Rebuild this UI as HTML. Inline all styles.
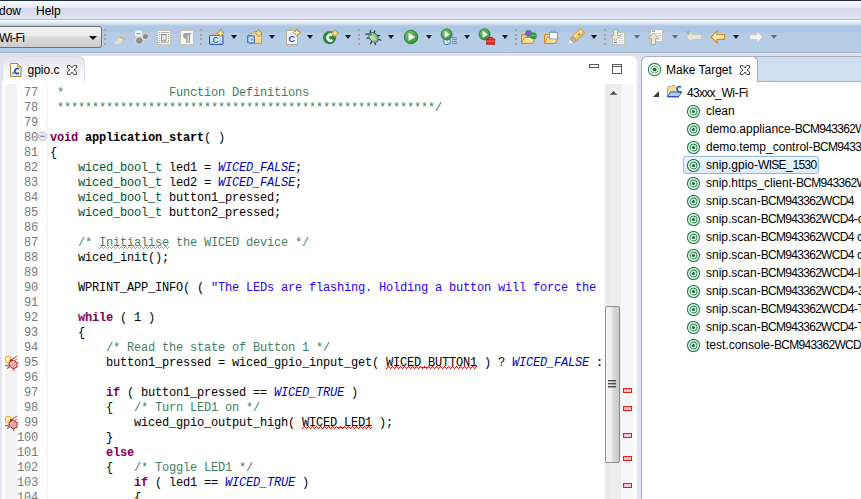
<!DOCTYPE html>
<html><head><meta charset="utf-8"><style>
*{margin:0;padding:0;box-sizing:border-box}
html,body{width:861px;height:499px;overflow:hidden;background:#dfe4f3;position:relative;font-family:"Liberation Sans",sans-serif;font-size:12px;color:#1e1e1e}
.ab{position:absolute;display:block}
#menubar{position:absolute;left:0;top:0;width:861px;height:20px;background:linear-gradient(#ffffff 0px,#f7f9fc 1px,#e7ebf6 7px,#d4daec 7px,#d9deef 11px,#dfe3f3 18px);border-top:1px solid #1c2a3f;border-bottom:1px solid #b3bbcc}
.menu{position:absolute;top:4px;font-size:12px;line-height:14px;color:#000}
#toolbar{position:absolute;left:0;top:20px;width:861px;height:33px;background:linear-gradient(#f9fbfd 0px,#f9fbfd 1px,#eef3fa 1px,#dce7f3 3px,#b3cae4 6px,#adc6e1 7px,#acc5e0 12px,#b4cce5 13px,#b6cde6 32px);border-bottom:1px solid #a8b5c8}
#combo{position:absolute;left:-4px;top:26px;width:106px;height:22px;border:1px solid #707070;border-radius:3px;background:linear-gradient(#f2f2f2,#eaeaea 45%,#dcdcdc 50%,#cdcdcd)}
.grip{position:absolute;width:2px;height:16px;top:29px;background:repeating-linear-gradient(#aea593 0 2px,transparent 2px 4.5px)}
.dd{position:absolute;top:35px;width:0;height:0;border-left:3.5px solid transparent;border-right:3.5px solid transparent;border-top:4px solid #1a1a1a}
.dd.g{border-top-color:#6e6e6e}
#editor{position:absolute;left:2px;top:56px;width:635px;height:450px;background:#fff;border-top-left-radius:6px;border-top-right-radius:6px}
#etab{position:absolute;left:2px;top:56px;width:83px;height:25px;background:linear-gradient(#e1e4ea,#ffffff);border-top-left-radius:6px;border-top-right-radius:6px;border:1px solid #dadde6;border-bottom:none}
.ruler{position:absolute;left:5px;top:84px;width:12px;height:420px;background:#f3f3f3}
.sep{position:absolute;left:47px;top:84px;width:1px;height:420px;background:#f3f3f3}
.num{position:absolute;right:823px;height:15px;line-height:15px;font-family:"Liberation Mono",monospace;font-size:12px;letter-spacing:-0.2px;color:#787878;white-space:pre}
.ln{position:absolute;left:50px;height:15px;line-height:15px;font-family:"Liberation Mono",monospace;font-size:12px;letter-spacing:-0.2px;color:#000;white-space:pre;width:554px;overflow:hidden}
.c{color:#3F7F5F} .k{color:#7F0055;font-weight:bold} .b{font-weight:bold} .t{color:#005032} .e{color:#0000C0;font-style:italic} .s{color:#2A00FF}
.sq{position:absolute}
#vscroll{position:absolute;left:605px;top:84px;width:16px;height:420px;background:linear-gradient(90deg,#e9e9e9,#efefef 50%,#ebebeb)}
#thumb{position:absolute;left:605px;top:306px;width:15px;height:157px;border:1px solid #8d8d8d;border-radius:2px;background:linear-gradient(90deg,#f7f7f7,#ececec 45%,#d9d9d9 55%,#c9c9c9)}
#ovr{position:absolute;left:621px;top:84px;width:13px;height:420px;background:#f7f7f7}
.mk{position:absolute;left:623px;width:9px;height:5px;border:1px solid #f01818;background:#f2c6cc}
#rpanel{position:absolute;left:641px;top:56px;width:230px;height:450px;background:#fff;border-left:1px solid #a6b0c4;border-top:1px solid #a6b0c4;border-top-left-radius:6px}
#rtabbar{position:absolute;left:745px;top:56px;width:120px;height:26px;background:#cfdff0;border-top:1px solid #a6b0c4;border-bottom:1px solid #a6b0c4}
#rtab{position:absolute;left:641px;top:56px;width:117px;height:26px;background:#fff;border:1px solid #a6b0c4;border-bottom:none;border-top-left-radius:6px;border-top-right-radius:6px}
.ti{position:absolute;height:18px;line-height:18px;white-space:nowrap;font-size:12px;color:#000}
.u{letter-spacing:-0.7px}
.sel{position:absolute;border:1px solid #92b8e6;border-radius:3px;background:linear-gradient(#f1f7fe,#dbeafc)}
</style></head><body>
<div id="menubar"></div>
<div class="menu" style="left:-1px">dow</div>
<div class="menu" style="left:36px">Help</div>
<div id="toolbar"></div>
<div id="combo"></div>
<div class="ab" style="left:-1px;top:32px;line-height:12px;font-size:12px;letter-spacing:-0.5px;color:#000">Wi-Fi</div>
<svg class="ab" style="left:89px;top:36px" width="8" height="5"><polygon points="0,0 8,0 4,4" fill="#111"/></svg>
<div class="grip" style="left:104px"></div>
<div class="grip" style="left:200px"></div>
<div class="grip" style="left:358px"></div>
<div class="grip" style="left:515px"></div>
<div class="grip" style="left:604px"></div>
<div class="dd" style="left:231px"></div>
<div class="dd" style="left:269px"></div>
<div class="dd" style="left:307px"></div>
<div class="dd" style="left:345px"></div>
<div class="dd" style="left:388px"></div>
<div class="dd" style="left:426px"></div>
<div class="dd" style="left:464px"></div>
<div class="dd" style="left:502px"></div>
<div class="dd" style="left:591px"></div>
<div class="dd g" style="left:634px"></div>
<div class="dd g" style="left:672px"></div>
<div class="dd" style="left:733px"></div>
<div class="dd g" style="left:771px"></div>
<svg class="ab" style="left:0;top:0" width="861" height="53"><defs><radialGradient id="gGreen" cx="0.4" cy="0.35" r="0.7"><stop offset="0" stop-color="#7cc878"/><stop offset="1" stop-color="#2e8c34"/></radialGradient><linearGradient id="gBlueBox" x1="0" y1="0" x2="0" y2="1"><stop offset="0" stop-color="#dbeafb"/><stop offset="1" stop-color="#98bfe9"/></linearGradient><linearGradient id="gFold" x1="0" y1="0" x2="0" y2="1"><stop offset="0" stop-color="#fff0c4"/><stop offset="1" stop-color="#f4cd7e"/></linearGradient><linearGradient id="gBug" x1="0" y1="0" x2="1" y2="1"><stop offset="0" stop-color="#e6f2d8"/><stop offset="1" stop-color="#6ea454"/></linearGradient><linearGradient id="gPen" x1="0" y1="0" x2="0" y2="1"><stop offset="0" stop-color="#ffe9a0"/><stop offset="1" stop-color="#f2b848"/></linearGradient><linearGradient id="gArrow" x1="0" y1="0" x2="0" y2="1"><stop offset="0" stop-color="#fffbe6"/><stop offset="1" stop-color="#fbd88a"/></linearGradient><linearGradient id="gFile" x1="0" y1="0" x2="0" y2="1"><stop offset="0" stop-color="#ffffff"/><stop offset="1" stop-color="#dfe8f4"/></linearGradient></defs><path d="M110,43.5 H121" stroke="#c9c2b3" stroke-width="1"/><polygon points="114,43.8 125.6,29.6 125.6,39.8 121,43.8" fill="#c8c6be"/><polygon points="114,43.8 119.6,37 123.4,39.4 120.6,43.8" fill="#e4e0c8"/><path d="M119.6,37 L125.6,39.6" stroke="#a9a79f" stroke-width="1"/><rect x="135" y="30.5" width="7" height="6" rx="2" fill="#f4f4f4"/><rect x="136.5" y="33" width="4" height="1.2" fill="#999"/><circle cx="139.3" cy="40.6" r="3.8" fill="#8d8d8d" stroke="#f2f2f2" stroke-width="0.8"/><circle cx="145.6" cy="36.5" r="3.2" fill="#8d8d8d" stroke="#f2f2f2" stroke-width="0.8"/><rect x="157.5" y="30.5" width="13" height="14" fill="#fafafa" stroke="#c9c0b6"/><rect x="159" y="32" width="1" height="1" fill="#a0a0a0"/><rect x="159" y="34" width="1" height="1" fill="#a0a0a0"/><rect x="159" y="36" width="1" height="1" fill="#a0a0a0"/><rect x="159" y="38" width="1" height="1" fill="#a0a0a0"/><rect x="159" y="40" width="1" height="1" fill="#a0a0a0"/><rect x="159" y="42" width="1" height="1" fill="#a0a0a0"/><rect x="168" y="34" width="1" height="1" fill="#a0a0a0"/><rect x="168" y="36" width="1" height="1" fill="#a0a0a0"/><rect x="168" y="38" width="1" height="1" fill="#a0a0a0"/><rect x="168" y="40" width="1" height="1" fill="#a0a0a0"/><path d="M161,32.5 H169 M161,42.5 H169" stroke="#b0b0b0"/><rect x="161.5" y="34.5" width="4.5" height="6.5" fill="#dedede" stroke="#8a8a8a"/><path d="M162,36.5 H166 M162,38.5 H166" stroke="#f4f4f4"/><rect x="180.5" y="30.5" width="13" height="14" fill="#f5f5f5" stroke="#c9c0b6"/><path d="M185.5,33 H191 V34.5 H190 V43 H188.6 V34.5 H187.6 V43 H186.2 V38.6 A2.8,2.8 0 0 1 185.5,33 Z" fill="#9e9e9e"/><rect x="212.5" y="32.8" width="5.5" height="2.4" fill="#e2aa96"/><rect x="209.5" y="35.5" width="13.5" height="9" rx="1" fill="url(#gBlueBox)" stroke="#2f52bd"/><path d="M209,35.6 H223.6" stroke="#8a6a9a" stroke-width="1"/><text x="212.6" y="43.4" font-family="Liberation Sans" font-weight="bold" font-size="8.6" fill="#1b5a92" stroke="#ffffff" stroke-width="1.6" paint-order="stroke">C</text><polygon points="220.6,29.499999999999996 222.2,31.699999999999996 224.4,33.3 222.2,34.9 220.6,37.099999999999994 219.0,34.9 216.79999999999998,33.3 219.0,31.699999999999996" fill="#d6ad2e" stroke="#b98f1c" stroke-width="0.8" stroke-linejoin="round"/><path d="M218.2,33.3 H223.0 M220.6,30.9 V35.699999999999996" stroke="#fff9dc" stroke-width="1.1"/><path d="M249.5,43.5 V33.5 H253 L254.5,31.5 H258.5 L260,33.5 H261.5 V43.5 Z" fill="url(#gFold)" stroke="#d4982f"/><rect x="247.5" y="35.5" width="7" height="7.5" rx="0.8" fill="#85a8e0" stroke="#4d73b8"/><text x="248.6" y="42" font-family="Liberation Sans" font-weight="bold" font-size="7" fill="#ffffff">C</text><polygon points="258.6,29.499999999999996 260.20000000000005,31.699999999999996 262.40000000000003,33.3 260.20000000000005,34.9 258.6,37.099999999999994 257.0,34.9 254.8,33.3 257.0,31.699999999999996" fill="#d6ad2e" stroke="#b98f1c" stroke-width="0.8" stroke-linejoin="round"/><path d="M256.20000000000005,33.3 H261.0 M258.6,30.9 V35.699999999999996" stroke="#fff9dc" stroke-width="1.1"/><path d="M286.5,30.5 H294.5 L297.5,33.5 V44.5 H286.5 Z" fill="#eef3fb" stroke="#b8ad85"/><text x="288.6" y="42.4" font-family="Liberation Sans" font-weight="bold" font-size="9" fill="#3f3ac8">C</text><polygon points="296.8,28.8 298.40000000000003,31.0 300.6,32.6 298.40000000000003,34.2 296.8,36.4 295.2,34.2 293.0,32.6 295.2,31.0" fill="#d6ad2e" stroke="#b98f1c" stroke-width="0.8" stroke-linejoin="round"/><path d="M294.40000000000003,32.6 H299.2 M296.8,30.200000000000003 V35.0" stroke="#fff9dc" stroke-width="1.1"/><circle cx="329.5" cy="37.6" r="6.6" fill="#2c8a3c"/><path d="M332.4,35.2 A3,3 0 1 0 332.4,40" fill="none" stroke="#fff" stroke-width="2.6"/><polygon points="334.8,29.400000000000002 336.40000000000003,31.6 338.6,33.2 336.40000000000003,34.800000000000004 334.8,37.0 333.2,34.800000000000004 331.0,33.2 333.2,31.6" fill="#d6ad2e" stroke="#b98f1c" stroke-width="0.8" stroke-linejoin="round"/><path d="M332.40000000000003,33.2 H337.2 M334.8,30.800000000000004 V35.6" stroke="#fff9dc" stroke-width="1.1"/><g stroke="#23402e" stroke-width="1.25" fill="none" stroke-linecap="round"><path d="M370.4,30.3 V33.6 M374.8,31 L373.6,34 M365.8,34 H369.3 M377,35.4 L379.8,35.7 M366.9,38.1 L369.7,37.8 M378.7,39.2 L380.8,40.2 M371.8,41 L370.7,43.9 M374.5,42 L375.6,44.5"/></g><ellipse cx="373.6" cy="37.4" rx="3.9" ry="5.4" transform="rotate(-42 373.6 37.4)" fill="url(#gBug)" stroke="#2b6a7a" stroke-width="1"/><path d="M371.5,36 L375.5,40" stroke="#f4fbe8" stroke-width="0.9" opacity="0.8"/><circle cx="370.3" cy="34.4" r="1.5" fill="#4f8a45"/><circle cx="411" cy="37" r="6.8" fill="url(#gGreen)" stroke="#2b7d33" stroke-width="0.9"/><polygon points="408.62,32.92 415.08,37 408.62,41.08" fill="#fff"/><circle cx="447" cy="41.3" r="3.4" fill="#f4f8ff" stroke="#3a68b6" stroke-width="1"/><path d="M447,39.3 V41.5 L448.5,42.7" stroke="#3a68b6" stroke-width="0.8" fill="none"/><path d="M452,37.5 H457 M452,39.5 H457 M452,41.5 H457 M452,43.5 H457" stroke="#6684b8" stroke-width="0.9"/><circle cx="446.6" cy="34.4" r="5.5" fill="url(#gGreen)" stroke="#2b7d33" stroke-width="0.9"/><polygon points="444.675,31.099999999999998 449.90000000000003,34.4 444.675,37.699999999999996" fill="#fff"/><circle cx="484.6" cy="34.4" r="5.5" fill="url(#gGreen)" stroke="#2b7d33" stroke-width="0.9"/><polygon points="482.675,31.099999999999998 487.90000000000003,34.4 482.675,37.699999999999996" fill="#fff"/><rect x="486.5" y="38.8" width="8.3" height="5.5" fill="#e02424" stroke="#b01010" stroke-width="0.6"/><path d="M488.8,38.8 V37.5 H492.5 V38.8" fill="none" stroke="#d01818" stroke-width="1"/><path d="M486.5,41.2 H494.8" stroke="#f8a0a0" stroke-width="0.7"/><path d="M521.5,43.5 V34.5 h4 l1,1 h5 v2" fill="#f3cf85" stroke="#c98a2e" stroke-width="1"/><path d="M521.5,43.5 l3,-6 h11 l-3,6 z" fill="url(#gFold)" stroke="#c98a2e" stroke-width="1"/><circle cx="528.6" cy="33.4" r="3.4" fill="#7462b6"/><circle cx="533.4" cy="35.7" r="3.5" fill="#37974a"/><path d="M530.5,35.5 H536.5" stroke="#8fd09a" stroke-width="0.6"/><path d="M544.5,43.5 V34.5 h4 l1,1 h5 v2" fill="#f3cf85" stroke="#c98a2e" stroke-width="1"/><path d="M544.5,43.5 l3,-6 h11 l-3,6 z" fill="url(#gFold)" stroke="#c98a2e" stroke-width="1"/><rect x="549.5" y="32.5" width="8" height="6.5" fill="#f6f8fc" stroke="#8a98b8"/><path d="M551.5,32.5 V31 H555.5 V32.5" fill="none" stroke="#8a98b8"/><g transform="rotate(-42 576 37)"><polygon points="566.5,37 570.5,34.4 570.5,39.6" fill="#fffbe0" stroke="#e8d890" stroke-width="0.5"/><rect x="570.5" y="34.3" width="3.6" height="5.4" fill="#bdb4ad" stroke="#8a7d70" stroke-width="0.6"/><rect x="574.2" y="34" width="11" height="6" rx="1.2" fill="url(#gPen)" stroke="#c78c22" stroke-width="0.8"/><circle cx="580" cy="37" r="0.8" fill="#2a4ea0"/></g><rect x="612.5" y="32.5" width="12" height="12" fill="#f8f8f5" stroke="#c8c2b8"/><path d="M619,34.5 H623 M619,36.5 H623 M619,38.5 H623 M619,40.5 H623 M618,42.5 H623" stroke="#cfcfcf" stroke-width="0.8"/><rect x="614" y="42" width="3" height="1.2" fill="#7a8ba0"/><path d="M613.5,29.5 H617.5 V35.5 H620.5 L615.5,41 L610.5,35.5 H613.5 Z" fill="#e9e6d6" stroke="#aaa69a" stroke-width="0.9"/><rect x="650.5" y="29.5" width="12" height="12" fill="#f8f8f5" stroke="#c8c2b8"/><path d="M655,33.5 H661 M655,35.5 H661 M656,37.5 H661 M656,39.5 H661" stroke="#cfcfcf" stroke-width="0.8"/><rect x="652" y="30.5" width="3" height="1.2" fill="#7a8ba0"/><path d="M651.5,44.5 H655.5 V38.5 H658.5 L653.5,33 L648.5,38.5 H651.5 Z" fill="#e9e6d6" stroke="#aaa69a" stroke-width="0.9"/><path d="M686.5,37 L692,31.5 V34.5 H701.5 V39.5 H692 V42.5 Z" fill="#e7e4d8" stroke="#c9c5b8" stroke-width="0.9"/><path d="M686,31 L689,34 M687,33.5 L689.5,31" stroke="#9a9a9a" stroke-width="0.8"/><path d="M711,37 L717,31.2 V34.6 H724.6 V39.4 H717 V42.8 Z" fill="url(#gArrow)" stroke="#d08a1c" stroke-width="1.1"/><path d="M763,37 L757,31.2 V34.6 H749.4 V39.4 H757 V42.8 Z" fill="#f4f4f4" stroke="#c6c6c6" stroke-width="1"/></svg>
<div id="editor"></div>
<div id="etab"></div>
<svg class="ab" style="left:0;top:56px" width="100" height="28">
<path d="M10.5,7.5 H17.5 L21,11 V20.5 H10.5 Z" fill="url(#gFile2)" stroke="#a88a48"/>
<path d="M17.5,7.5 V11 H21 Z" fill="#e8c878" stroke="#a88a48" stroke-width="0.6"/>
<rect x="12.4" y="16.4" width="1.5" height="1.5" fill="#1f5a98"/>
<path d="M19,13.3 A2.4,2.6 0 1 0 19,16.9" fill="none" stroke="#1f5a98" stroke-width="1.7"/>
<polygon points="67.5,9.5 70.1,9.5 72.0,12.1 73.9,9.5 76.5,9.5 76.5,12.1 73.9,14.0 76.5,15.9 76.5,18.5 73.9,18.5 72.0,15.9 70.1,18.5 67.5,18.5 67.5,15.9 70.1,14.0 67.5,12.1" fill="#fff" stroke="#4a4a4a" stroke-width="1" stroke-linejoin="round"/>
<defs><linearGradient id="gFile2" x1="0" y1="0" x2="0" y2="1"><stop offset="0" stop-color="#ffffff"/><stop offset="1" stop-color="#e2eaf5"/></linearGradient></defs>
</svg>
<div class="ab" style="left:27.5px;top:63px;line-height:14px;font-size:12px;color:#000">gpio.c</div>
<svg class="ab" style="left:585px;top:60px" width="45" height="18">
<rect x="4.5" y="4.5" width="9" height="3" fill="#fff" stroke="#5a5a5a"/>
<rect x="27.5" y="4.5" width="9" height="9" fill="#fff" stroke="#5a5a5a"/>
<path d="M27.5,6.5 H36.5" stroke="#5a5a5a" stroke-width="1"/>
</svg>
<svg class="ab" style="left:36px;top:130px" width="12" height="12">
<circle cx="6.6" cy="6.3" r="4.2" fill="#e9eff8" stroke="#b4c0d4" stroke-width="1"/>
<path d="M4.3,6.3 H8.9" stroke="#6f7f9a" stroke-width="1.2"/>
</svg>
<div class="ruler"></div>
<div class="sep"></div>
<svg class="ab" style="left:2px;top:353px" width="18" height="19">
<rect x="3.5" y="3.5" width="5.5" height="6" rx="1" fill="#fde7a2" stroke="#ecae36" stroke-width="1"/>
<rect x="4.6" y="5.2" width="3.4" height="1.2" fill="#fffaf0"/>
<g stroke="#b52222" stroke-width="0.9" fill="none"><path d="M10,6.5 L15,3 M3,13 L7,11.8 M4.8,15.5 L8,14 M16.5,9.5 L14.8,10 M15.5,14.5 L14,13.8 M11.8,17.8 L11.6,15.8 M14.5,5.8 L13.6,7.6"/></g>
<ellipse cx="11.2" cy="11.4" rx="3.7" ry="4.3" transform="rotate(-40 11.2 11.4)" fill="#eab4b4" stroke="#b52222" stroke-width="0.9"/>
<path d="M8.8,13.5 L13.5,8.8 M10.3,14.8 L14.6,10.5" stroke="#d88080" stroke-width="0.7"/>
<circle cx="9" cy="7.2" r="1.2" fill="#b52222"/>
<rect x="5.5" y="12.5" width="1.8" height="1.8" fill="#6a8ab0"/>
</svg><svg class="ab" style="left:2px;top:413px" width="18" height="19">
<rect x="3.5" y="3.5" width="5.5" height="6" rx="1" fill="#fde7a2" stroke="#ecae36" stroke-width="1"/>
<rect x="4.6" y="5.2" width="3.4" height="1.2" fill="#fffaf0"/>
<g stroke="#b52222" stroke-width="0.9" fill="none"><path d="M10,6.5 L15,3 M3,13 L7,11.8 M4.8,15.5 L8,14 M16.5,9.5 L14.8,10 M15.5,14.5 L14,13.8 M11.8,17.8 L11.6,15.8 M14.5,5.8 L13.6,7.6"/></g>
<ellipse cx="11.2" cy="11.4" rx="3.7" ry="4.3" transform="rotate(-40 11.2 11.4)" fill="#eab4b4" stroke="#b52222" stroke-width="0.9"/>
<path d="M8.8,13.5 L13.5,8.8 M10.3,14.8 L14.6,10.5" stroke="#d88080" stroke-width="0.7"/>
<circle cx="9" cy="7.2" r="1.2" fill="#b52222"/>
<rect x="5.5" y="12.5" width="1.8" height="1.8" fill="#6a8ab0"/>
</svg>
<div class="num" style="top:86px">77</div><div class="num" style="top:101px">78</div><div class="num" style="top:116px">79</div><div class="num" style="top:131px">80</div><div class="num" style="top:146px">81</div><div class="num" style="top:161px">82</div><div class="num" style="top:176px">83</div><div class="num" style="top:191px">84</div><div class="num" style="top:206px">85</div><div class="num" style="top:221px">86</div><div class="num" style="top:236px">87</div><div class="num" style="top:251px">88</div><div class="num" style="top:266px">89</div><div class="num" style="top:281px">90</div><div class="num" style="top:296px">91</div><div class="num" style="top:311px">92</div><div class="num" style="top:326px">93</div><div class="num" style="top:341px">94</div><div class="num" style="top:356px">95</div><div class="num" style="top:371px">96</div><div class="num" style="top:386px">97</div><div class="num" style="top:401px">98</div><div class="num" style="top:416px">99</div><div class="num" style="top:431px">100</div><div class="num" style="top:446px">101</div><div class="num" style="top:461px">102</div><div class="num" style="top:476px">103</div><div class="num" style="top:491px">104</div>
<div class="ln" style="top:86px"><span class="c"> *               Function Definitions</span></div><div class="ln" style="top:101px"><span class="c"> ******************************************************/</span></div><div class="ln" style="top:116px"></div><div class="ln" style="top:131px"><span class="k">void</span> <span class="b">application_start</span>( )</div><div class="ln" style="top:146px">{</div><div class="ln" style="top:161px">    <span class="t">wiced_bool_t</span> led1 = <span class="e">WICED_FALSE</span>;</div><div class="ln" style="top:176px">    <span class="t">wiced_bool_t</span> led2 = <span class="e">WICED_FALSE</span>;</div><div class="ln" style="top:191px">    <span class="t">wiced_bool_t</span> button1_pressed;</div><div class="ln" style="top:206px">    <span class="t">wiced_bool_t</span> button2_pressed;</div><div class="ln" style="top:221px"></div><div class="ln" style="top:236px">    <span class="c">/* Initialise the WICED device */</span></div><div class="ln" style="top:251px">    wiced_init();</div><div class="ln" style="top:266px"></div><div class="ln" style="top:281px">    WPRINT_APP_INFO( ( <span class="s">&quot;The LEDs are flashing. Holding a button will force the</span></div><div class="ln" style="top:296px"></div><div class="ln" style="top:311px">    <span class="k">while</span> ( 1 )</div><div class="ln" style="top:326px">    {</div><div class="ln" style="top:341px">        <span class="c">/* Read the state of Button 1 */</span></div><div class="ln" style="top:356px">        button1_pressed = wiced_gpio_input_get( WICED_BUTTON1 ) ? <span class="e">WICED_FALSE</span> :</div><div class="ln" style="top:371px"></div><div class="ln" style="top:386px">        <span class="k">if</span> ( button1_pressed == <span class="e">WICED_TRUE</span> )</div><div class="ln" style="top:401px">        {   <span class="c">/* Turn LED1 on */</span></div><div class="ln" style="top:416px">            wiced_gpio_output_high( WICED_LED1 );</div><div class="ln" style="top:431px">        }</div><div class="ln" style="top:446px">        <span class="k">else</span></div><div class="ln" style="top:461px">        {   <span class="c">/* Toggle LED1 */</span></div><div class="ln" style="top:476px">            <span class="k">if</span> ( led1 == <span class="e">WICED_TRUE</span> )</div><div class="ln" style="top:491px">            {</div>
<svg class="sq" style="left:99.0px;top:246px" width="70.0" height="3" shape-rendering="crispEdges"><path d="M0,2h1v1h-1zM1,1h1v1h-1zM2,0h1v1h-1zM3,1h1v1h-1zM4,2h1v1h-1zM5,1h1v1h-1zM6,0h1v1h-1zM7,1h1v1h-1zM8,2h1v1h-1zM9,1h1v1h-1zM10,0h1v1h-1zM11,1h1v1h-1zM12,2h1v1h-1zM13,1h1v1h-1zM14,0h1v1h-1zM15,1h1v1h-1zM16,2h1v1h-1zM17,1h1v1h-1zM18,0h1v1h-1zM19,1h1v1h-1zM20,2h1v1h-1zM21,1h1v1h-1zM22,0h1v1h-1zM23,1h1v1h-1zM24,2h1v1h-1zM25,1h1v1h-1zM26,0h1v1h-1zM27,1h1v1h-1zM28,2h1v1h-1zM29,1h1v1h-1zM30,0h1v1h-1zM31,1h1v1h-1zM32,2h1v1h-1zM33,1h1v1h-1zM34,0h1v1h-1zM35,1h1v1h-1zM36,2h1v1h-1zM37,1h1v1h-1zM38,0h1v1h-1zM39,1h1v1h-1zM40,2h1v1h-1zM41,1h1v1h-1zM42,0h1v1h-1zM43,1h1v1h-1zM44,2h1v1h-1zM45,1h1v1h-1zM46,0h1v1h-1zM47,1h1v1h-1zM48,2h1v1h-1zM49,1h1v1h-1zM50,0h1v1h-1zM51,1h1v1h-1zM52,2h1v1h-1zM53,1h1v1h-1zM54,0h1v1h-1zM55,1h1v1h-1zM56,2h1v1h-1zM57,1h1v1h-1zM58,0h1v1h-1zM59,1h1v1h-1zM60,2h1v1h-1zM61,1h1v1h-1zM62,0h1v1h-1zM63,1h1v1h-1zM64,2h1v1h-1zM65,1h1v1h-1zM66,0h1v1h-1zM67,1h1v1h-1zM68,2h1v1h-1zM69,1h1v1h-1z" fill="#FF7F50"/></svg><svg class="sq" style="left:386.0px;top:366px" width="91.0" height="3" shape-rendering="crispEdges"><path d="M0,2h1v1h-1zM1,1h1v1h-1zM2,0h1v1h-1zM3,1h1v1h-1zM4,2h1v1h-1zM5,1h1v1h-1zM6,0h1v1h-1zM7,1h1v1h-1zM8,2h1v1h-1zM9,1h1v1h-1zM10,0h1v1h-1zM11,1h1v1h-1zM12,2h1v1h-1zM13,1h1v1h-1zM14,0h1v1h-1zM15,1h1v1h-1zM16,2h1v1h-1zM17,1h1v1h-1zM18,0h1v1h-1zM19,1h1v1h-1zM20,2h1v1h-1zM21,1h1v1h-1zM22,0h1v1h-1zM23,1h1v1h-1zM24,2h1v1h-1zM25,1h1v1h-1zM26,0h1v1h-1zM27,1h1v1h-1zM28,2h1v1h-1zM29,1h1v1h-1zM30,0h1v1h-1zM31,1h1v1h-1zM32,2h1v1h-1zM33,1h1v1h-1zM34,0h1v1h-1zM35,1h1v1h-1zM36,2h1v1h-1zM37,1h1v1h-1zM38,0h1v1h-1zM39,1h1v1h-1zM40,2h1v1h-1zM41,1h1v1h-1zM42,0h1v1h-1zM43,1h1v1h-1zM44,2h1v1h-1zM45,1h1v1h-1zM46,0h1v1h-1zM47,1h1v1h-1zM48,2h1v1h-1zM49,1h1v1h-1zM50,0h1v1h-1zM51,1h1v1h-1zM52,2h1v1h-1zM53,1h1v1h-1zM54,0h1v1h-1zM55,1h1v1h-1zM56,2h1v1h-1zM57,1h1v1h-1zM58,0h1v1h-1zM59,1h1v1h-1zM60,2h1v1h-1zM61,1h1v1h-1zM62,0h1v1h-1zM63,1h1v1h-1zM64,2h1v1h-1zM65,1h1v1h-1zM66,0h1v1h-1zM67,1h1v1h-1zM68,2h1v1h-1zM69,1h1v1h-1zM70,0h1v1h-1zM71,1h1v1h-1zM72,2h1v1h-1zM73,1h1v1h-1zM74,0h1v1h-1zM75,1h1v1h-1zM76,2h1v1h-1zM77,1h1v1h-1zM78,0h1v1h-1zM79,1h1v1h-1zM80,2h1v1h-1zM81,1h1v1h-1zM82,0h1v1h-1zM83,1h1v1h-1zM84,2h1v1h-1zM85,1h1v1h-1zM86,0h1v1h-1zM87,1h1v1h-1zM88,2h1v1h-1zM89,1h1v1h-1zM90,0h1v1h-1z" fill="#FF0000"/></svg><svg class="sq" style="left:302.0px;top:426px" width="70.0" height="3" shape-rendering="crispEdges"><path d="M0,2h1v1h-1zM1,1h1v1h-1zM2,0h1v1h-1zM3,1h1v1h-1zM4,2h1v1h-1zM5,1h1v1h-1zM6,0h1v1h-1zM7,1h1v1h-1zM8,2h1v1h-1zM9,1h1v1h-1zM10,0h1v1h-1zM11,1h1v1h-1zM12,2h1v1h-1zM13,1h1v1h-1zM14,0h1v1h-1zM15,1h1v1h-1zM16,2h1v1h-1zM17,1h1v1h-1zM18,0h1v1h-1zM19,1h1v1h-1zM20,2h1v1h-1zM21,1h1v1h-1zM22,0h1v1h-1zM23,1h1v1h-1zM24,2h1v1h-1zM25,1h1v1h-1zM26,0h1v1h-1zM27,1h1v1h-1zM28,2h1v1h-1zM29,1h1v1h-1zM30,0h1v1h-1zM31,1h1v1h-1zM32,2h1v1h-1zM33,1h1v1h-1zM34,0h1v1h-1zM35,1h1v1h-1zM36,2h1v1h-1zM37,1h1v1h-1zM38,0h1v1h-1zM39,1h1v1h-1zM40,2h1v1h-1zM41,1h1v1h-1zM42,0h1v1h-1zM43,1h1v1h-1zM44,2h1v1h-1zM45,1h1v1h-1zM46,0h1v1h-1zM47,1h1v1h-1zM48,2h1v1h-1zM49,1h1v1h-1zM50,0h1v1h-1zM51,1h1v1h-1zM52,2h1v1h-1zM53,1h1v1h-1zM54,0h1v1h-1zM55,1h1v1h-1zM56,2h1v1h-1zM57,1h1v1h-1zM58,0h1v1h-1zM59,1h1v1h-1zM60,2h1v1h-1zM61,1h1v1h-1zM62,0h1v1h-1zM63,1h1v1h-1zM64,2h1v1h-1zM65,1h1v1h-1zM66,0h1v1h-1zM67,1h1v1h-1zM68,2h1v1h-1zM69,1h1v1h-1z" fill="#FF0000"/></svg>
<div id="vscroll"></div>
<svg class="ab" style="left:609px;top:90px" width="9" height="6"><defs><linearGradient id="gUp" x1="0" y1="0" x2="0" y2="1"><stop offset="0" stop-color="#2a2a2a"/><stop offset="1" stop-color="#7a7a7a"/></linearGradient></defs><polygon points="0.5,5 8.5,5 4.5,1" fill="url(#gUp)"/></svg>
<div id="thumb"></div>
<svg class="ab" style="left:608px;top:380px" width="9" height="8"><rect x="0" y="0" width="8" height="1.4" fill="#4a4a4a"/><rect x="0" y="3" width="8" height="1.4" fill="#4a4a4a"/><rect x="0" y="6" width="8" height="1.4" fill="#4a4a4a"/></svg>
<div id="ovr"></div>
<div class="mk" style="top:388px"></div>
<div class="mk" style="top:406px"></div>
<div class="mk" style="top:433px"></div>
<div class="mk" style="top:456px"></div>
<div class="mk" style="top:483px"></div>
<div id="rpanel"></div>
<div id="rtabbar"></div>
<div id="rtab"></div>
<svg class="ab" style="left:640px;top:56px" width="221" height="45">
<circle cx="14.5" cy="13.5" r="6.1" fill="#fff" stroke="#2e8a50" stroke-width="1.2"/>
<circle cx="14.5" cy="13.5" r="3.7" fill="#fff" stroke="#4aa06a" stroke-width="0.9"/>
<circle cx="14.5" cy="13.5" r="2" fill="#1d7236"/>
<polygon points="100.5,9.5 103.1,9.5 105.0,12.1 106.9,9.5 109.5,9.5 109.5,12.1 106.9,14.0 109.5,15.9 109.5,18.5 106.9,18.5 105.0,15.9 103.1,18.5 100.5,18.5 100.5,15.9 103.1,14.0 100.5,12.1" fill="#fff" stroke="#4a4a4a" stroke-width="1" stroke-linejoin="round"/>
<polygon points="13.5,35 19,35 19,41 13.5,41" fill="none"/>
<polygon points="19,35 19,41 13,41" fill="#3a3a3a"/>
<path d="M27.5,40.5 V31.5 Q27.5,30.5 28.5,30.5 H31 L32,29.5 H35 L36,30.5 V35" fill="#f6d98e" stroke="#9aa4b8" stroke-width="0.9"/>
<rect x="28" y="31" width="8" height="8" fill="#f8dc92"/>
<path d="M27.5,40.5 L30.5,36 H42 L38.5,40.5 Z" fill="#a9cdf2" stroke="#3456c4" stroke-width="1"/>
<path d="M27.5,40.8 H39" stroke="#2b4fc0" stroke-width="1.2"/>
<path d="M41,31.2 A2.3,2.7 0 1 0 41,35.2" fill="none" stroke="#1f5a98" stroke-width="1.5"/>
</svg>
<div class="ab" style="left:666px;top:63px;line-height:14px;font-size:12px;color:#000">Make Target</div>
<div class="ti" style="left:687px;top:84px"><span class="u">43xxx</span>_<span class="u">W</span>i-<span class="u">F</span>i</div>

<svg class="ab" style="left:687px;top:105px" width="14" height="14" viewBox="0 0 14 14"><circle cx="6.5" cy="6.5" r="6" fill="#fff" stroke="#23824a" stroke-width="1.2"/><circle cx="6.5" cy="6.5" r="3.4" fill="none" stroke="#2c8c56" stroke-width="1.1"/><circle cx="6.5" cy="6.5" r="1.6" fill="#146a1e"/></svg><div class="ti" style="left:706px;top:102px">clean</div><svg class="ab" style="left:687px;top:123px" width="14" height="14" viewBox="0 0 14 14"><circle cx="6.5" cy="6.5" r="6" fill="#fff" stroke="#23824a" stroke-width="1.2"/><circle cx="6.5" cy="6.5" r="3.4" fill="none" stroke="#2c8c56" stroke-width="1.1"/><circle cx="6.5" cy="6.5" r="1.6" fill="#146a1e"/></svg><div class="ti" style="left:706px;top:120px">demo.appliance-<span class="u">BCM943362WCD4</span></div><svg class="ab" style="left:687px;top:141px" width="14" height="14" viewBox="0 0 14 14"><circle cx="6.5" cy="6.5" r="6" fill="#fff" stroke="#23824a" stroke-width="1.2"/><circle cx="6.5" cy="6.5" r="3.4" fill="none" stroke="#2c8c56" stroke-width="1.1"/><circle cx="6.5" cy="6.5" r="1.6" fill="#146a1e"/></svg><div class="ti" style="left:706px;top:138px">demo.temp_control-<span class="u">BCM943362WCD4</span></div><div class="sel" style="left:683px;top:156px;width:136px;height:18px"></div><svg class="ab" style="left:687px;top:159px" width="14" height="14" viewBox="0 0 14 14"><circle cx="6.5" cy="6.5" r="6" fill="#fff" stroke="#23824a" stroke-width="1.2"/><circle cx="6.5" cy="6.5" r="3.4" fill="none" stroke="#2c8c56" stroke-width="1.1"/><circle cx="6.5" cy="6.5" r="1.6" fill="#146a1e"/></svg><div class="ti" style="left:706px;top:156px">snip.gpio-<span class="u">WISE</span>_<span class="u">1530</span></div><svg class="ab" style="left:687px;top:177px" width="14" height="14" viewBox="0 0 14 14"><circle cx="6.5" cy="6.5" r="6" fill="#fff" stroke="#23824a" stroke-width="1.2"/><circle cx="6.5" cy="6.5" r="3.4" fill="none" stroke="#2c8c56" stroke-width="1.1"/><circle cx="6.5" cy="6.5" r="1.6" fill="#146a1e"/></svg><div class="ti" style="left:706px;top:174px">snip.https_client-<span class="u">BCM943362WCD4</span></div><svg class="ab" style="left:687px;top:195px" width="14" height="14" viewBox="0 0 14 14"><circle cx="6.5" cy="6.5" r="6" fill="#fff" stroke="#23824a" stroke-width="1.2"/><circle cx="6.5" cy="6.5" r="3.4" fill="none" stroke="#2c8c56" stroke-width="1.1"/><circle cx="6.5" cy="6.5" r="1.6" fill="#146a1e"/></svg><div class="ti" style="left:706px;top:192px">snip.scan-<span class="u">BCM943362WCD4</span></div><svg class="ab" style="left:687px;top:213px" width="14" height="14" viewBox="0 0 14 14"><circle cx="6.5" cy="6.5" r="6" fill="#fff" stroke="#23824a" stroke-width="1.2"/><circle cx="6.5" cy="6.5" r="3.4" fill="none" stroke="#2c8c56" stroke-width="1.1"/><circle cx="6.5" cy="6.5" r="1.6" fill="#146a1e"/></svg><div class="ti" style="left:706px;top:210px">snip.scan-<span class="u">BCM943362WCD4</span>-c</div><svg class="ab" style="left:687px;top:231px" width="14" height="14" viewBox="0 0 14 14"><circle cx="6.5" cy="6.5" r="6" fill="#fff" stroke="#23824a" stroke-width="1.2"/><circle cx="6.5" cy="6.5" r="3.4" fill="none" stroke="#2c8c56" stroke-width="1.1"/><circle cx="6.5" cy="6.5" r="1.6" fill="#146a1e"/></svg><div class="ti" style="left:706px;top:228px">snip.scan-<span class="u">BCM943362WCD4</span> c</div><svg class="ab" style="left:687px;top:249px" width="14" height="14" viewBox="0 0 14 14"><circle cx="6.5" cy="6.5" r="6" fill="#fff" stroke="#23824a" stroke-width="1.2"/><circle cx="6.5" cy="6.5" r="3.4" fill="none" stroke="#2c8c56" stroke-width="1.1"/><circle cx="6.5" cy="6.5" r="1.6" fill="#146a1e"/></svg><div class="ti" style="left:706px;top:246px">snip.scan-<span class="u">BCM943362WCD4</span> c</div><svg class="ab" style="left:687px;top:267px" width="14" height="14" viewBox="0 0 14 14"><circle cx="6.5" cy="6.5" r="6" fill="#fff" stroke="#23824a" stroke-width="1.2"/><circle cx="6.5" cy="6.5" r="3.4" fill="none" stroke="#2c8c56" stroke-width="1.1"/><circle cx="6.5" cy="6.5" r="1.6" fill="#146a1e"/></svg><div class="ti" style="left:706px;top:264px">snip.scan-<span class="u">BCM943362WCD4</span>-l</div><svg class="ab" style="left:687px;top:285px" width="14" height="14" viewBox="0 0 14 14"><circle cx="6.5" cy="6.5" r="6" fill="#fff" stroke="#23824a" stroke-width="1.2"/><circle cx="6.5" cy="6.5" r="3.4" fill="none" stroke="#2c8c56" stroke-width="1.1"/><circle cx="6.5" cy="6.5" r="1.6" fill="#146a1e"/></svg><div class="ti" style="left:706px;top:282px">snip.scan-<span class="u">BCM943362WCD4</span>-<span class="u">3</span></div><svg class="ab" style="left:687px;top:303px" width="14" height="14" viewBox="0 0 14 14"><circle cx="6.5" cy="6.5" r="6" fill="#fff" stroke="#23824a" stroke-width="1.2"/><circle cx="6.5" cy="6.5" r="3.4" fill="none" stroke="#2c8c56" stroke-width="1.1"/><circle cx="6.5" cy="6.5" r="1.6" fill="#146a1e"/></svg><div class="ti" style="left:706px;top:300px">snip.scan-<span class="u">BCM943362WCD4</span>-<span class="u">T</span></div><svg class="ab" style="left:687px;top:321px" width="14" height="14" viewBox="0 0 14 14"><circle cx="6.5" cy="6.5" r="6" fill="#fff" stroke="#23824a" stroke-width="1.2"/><circle cx="6.5" cy="6.5" r="3.4" fill="none" stroke="#2c8c56" stroke-width="1.1"/><circle cx="6.5" cy="6.5" r="1.6" fill="#146a1e"/></svg><div class="ti" style="left:706px;top:318px">snip.scan-<span class="u">BCM943362WCD4</span>-<span class="u">T</span></div><svg class="ab" style="left:687px;top:339px" width="14" height="14" viewBox="0 0 14 14"><circle cx="6.5" cy="6.5" r="6" fill="#fff" stroke="#23824a" stroke-width="1.2"/><circle cx="6.5" cy="6.5" r="3.4" fill="none" stroke="#2c8c56" stroke-width="1.1"/><circle cx="6.5" cy="6.5" r="1.6" fill="#146a1e"/></svg><div class="ti" style="left:706px;top:336px">test.console-<span class="u">BCM943362WCD4</span></div>
</body></html>
